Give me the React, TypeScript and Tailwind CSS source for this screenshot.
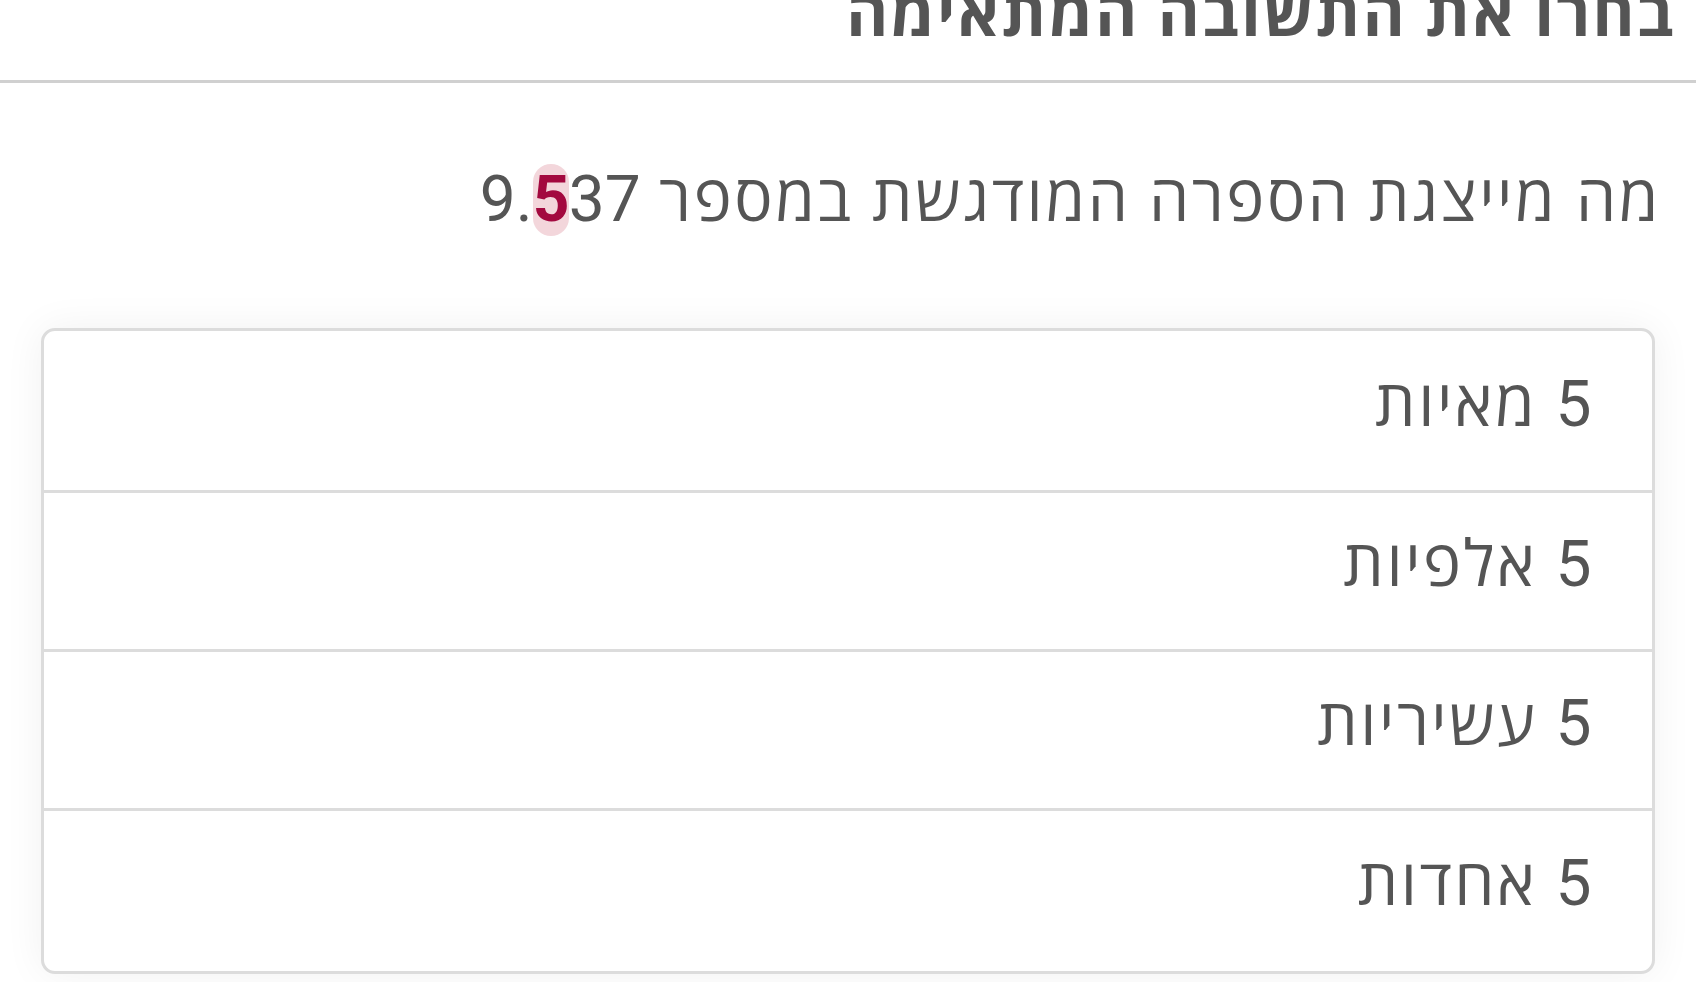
import React from "react";

const answers = ["5 מאיות", "5 אלפיות", "5 עשיריות", "5 אחדות"];

export default function App() {
  return (
    <div
      dir="rtl"
      className="w-[1696px] h-[982px] overflow-hidden bg-white text-[#555555]"
      style={{ fontFamily: "Roboto, 'Open Sans', 'Noto Sans', sans-serif" }}
    >
      <header className="h-[83px] overflow-hidden border-b-[3px] border-[#d0d0d0] pr-[20px] flex items-start">
        <h1 className="text-[64px] font-bold leading-none mt-[-17px] tracking-[2.3px]">
          בחרו את התשובה המתאימה
        </h1>
      </header>

      <main className="px-[41px] pt-[81px]">
        <p className="text-[64px] leading-[72px] tracking-[2.6px] mr-[-6px]">
          מה מייצגת הספרה המודגשת במספר{" "}
          <span dir="ltr" className="inline-block tracking-normal">
            9.
            <span className="inline-block rounded-full bg-[#f3d6db] font-bold text-[#a3093f] w-[36px] text-center">
              5
            </span>
            37
          </span>
        </p>

        <ul className="mt-[92px] rounded-[14px] border-[3px] border-[#dcdcdc] bg-white shadow-[0_0_40px_rgba(0,0,0,0.06)] overflow-hidden">
          {answers.map((a, i) => (
            <li
              key={a}
              className={`flex items-center pr-[58px] text-[64px] leading-none tracking-[2.5px] ${
                i === answers.length - 1 ? "h-[163px] pb-[14px]" : "h-[159px] pb-[12px]"
              } ${i > 0 ? "border-t-[3px] border-[#dcdcdc]" : ""}`}
            >
              {a}
            </li>
          ))}
        </ul>
      </main>
    </div>
  );
}
